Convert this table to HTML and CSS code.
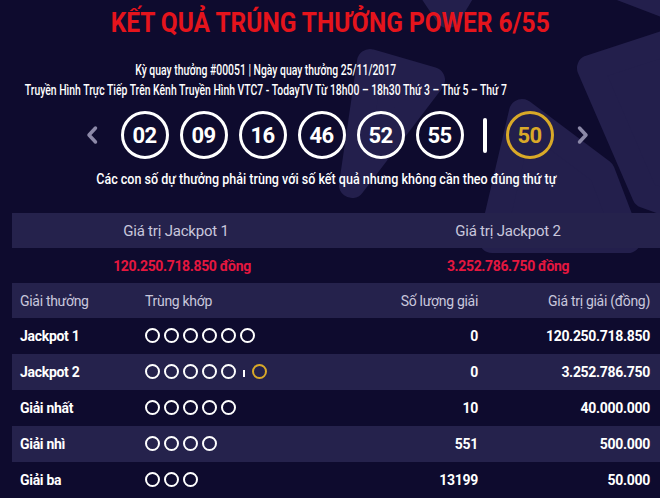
FILE: index.html
```html
<!DOCTYPE html>
<html lang="vi">
<head>
<meta charset="utf-8">
<title>Kết quả Power 6/55</title>
<link rel="stylesheet" href="styles.css">
</head>
<body>
<div class="page">
  <svg class="bg-logo" viewBox="0 0 660 260" width="660" height="260" aria-hidden="true">
    <g fill="#231f4c" stroke="#231f4c" stroke-width="26" stroke-linejoin="round">
      <polygon points="418,-30 475,-30 448,15"/>
      <polygon points="575,-30 700,-30 700,18"/>
      <polygon points="590,68 700,32 700,215 645,195"/>
      <polygon points="370,62 432,80 352,185"/>
      <polygon points="492,240 522,112 602,172 628,240"/>
    </g>
  </svg>

  <h1 class="title"><span class="cond">KẾT QUẢ TRÚNG THƯỞNG POWER 6/55</span></h1>

  <div class="info">
    <span class="info-line cond">Kỳ quay thưởng #00051 | Ngày quay thưởng 25/11/2017</span>
    <span class="info-line cond">Truyền Hình Trực Tiếp Trên Kênh Truyền Hình VTC7 - TodayTV Từ 18h00 – 18h30 Thứ 3 – Thứ 5 – Thứ 7</span>
  </div>

  <div class="balls">
    <svg class="arrow" viewBox="0 0 12 20" width="12" height="20"><polyline points="9.5,3 3,10 9.5,17" fill="none" stroke="#8c89a8" stroke-width="3.5" stroke-linecap="round" stroke-linejoin="round"/></svg>
    <div class="ball-list">
      <span class="ball">02</span>
      <span class="ball">09</span>
      <span class="ball">16</span>
      <span class="ball">46</span>
      <span class="ball">52</span>
      <span class="ball">55</span>
      <span class="divider"></span>
      <span class="ball ball-gold">50</span>
    </div>
    <svg class="arrow" viewBox="0 0 12 20" width="12" height="20"><polyline points="2.5,3 9,10 2.5,17" fill="none" stroke="#8c89a8" stroke-width="3.5" stroke-linecap="round" stroke-linejoin="round"/></svg>
  </div>

  <p class="caption"><span class="cond">Các con số dự thưởng phải trùng với số kết quả nhưng không cần theo đúng thứ tự</span></p>

  <div class="jackpot">
    <div class="jp-head jp-1">Giá trị Jackpot 1</div>
    <div class="jp-head jp-2">Giá trị Jackpot 2</div>
    <div class="jp-val jp-1">120.250.718.850 đồng</div>
    <div class="jp-val jp-2">3.252.786.750 đồng</div>
  </div>

  <div class="prizes">
    <div class="row row-head">
      <span>Giải thưởng</span>
      <span>Trùng khớp</span>
      <span class="num">Số lượng giải</span>
      <span class="num">Giá trị giải (đồng)</span>
    </div>
    <div class="row">
      <span>Jackpot 1</span>
      <span class="dots"><i></i><i></i><i></i><i></i><i></i><i></i></span>
      <span class="num">0</span>
      <span class="num">120.250.718.850</span>
    </div>
    <div class="row row-alt">
      <span>Jackpot 2</span>
      <span class="dots"><i></i><i></i><i></i><i></i><i></i><b class="sep"></b><i class="gold"></i></span>
      <span class="num">0</span>
      <span class="num">3.252.786.750</span>
    </div>
    <div class="row">
      <span>Giải nhất</span>
      <span class="dots"><i></i><i></i><i></i><i></i><i></i></span>
      <span class="num">10</span>
      <span class="num">40.000.000</span>
    </div>
    <div class="row row-alt">
      <span>Giải nhì</span>
      <span class="dots"><i></i><i></i><i></i><i></i></span>
      <span class="num">551</span>
      <span class="num">500.000</span>
    </div>
    <div class="row">
      <span>Giải ba</span>
      <span class="dots"><i></i><i></i><i></i></span>
      <span class="num">13199</span>
      <span class="num">50.000</span>
    </div>
  </div>
</div>
</body>
</html>
```

FILE: styles.css
```css
* { box-sizing: border-box; }
html, body {
  margin: 0;
  padding: 0;
  background: #0e0b2e;
}
body {
  font-family: Roboto, "Noto Sans", sans-serif;
  color: #ffffff;
}
.page {
  position: relative;
  width: 660px;
  height: 498px;
  overflow: hidden;
  background: #0e0b2e;
}
.bg-logo {
  position: absolute;
  left: 0;
  top: 0;
}
.cond {
  display: inline-block;
  white-space: nowrap;
  transform-origin: center;
}
.title {
  position: relative;
  margin: 0;
  padding-top: 6px;
  height: 60px;
  text-align: center;
  font-size: 28px;
  line-height: 33px;
  font-weight: 700;
  color: #e5141c;
}
.title .cond { transform: scaleX(0.874); }
.info {
  position: relative;
  width: 532px;
  display: flex;
  flex-direction: column;
  align-items: center;
}
.info-line {
  font-size: 14px;
  line-height: 20px;
  font-weight: 500;
  transform: scaleX(0.742);
}
.balls {
  position: relative;
  margin-top: 11px;
  display: flex;
  align-items: center;
  justify-content: center;
  gap: 23px;
  padding-left: 14px;
  height: 48px;
}
.arrow { display: block; }
.ball-list {
  display: flex;
  align-items: center;
  gap: 11px;
}
.ball {
  width: 48px;
  height: 48px;
  border: 3px solid #ffffff;
  border-radius: 50%;
  display: flex;
  align-items: center;
  justify-content: center;
  font-size: 22px;
  font-weight: 700;
  letter-spacing: -0.6px;
}
.ball-gold {
  border-color: #d9a928;
  color: #d9a928;
}
.divider {
  width: 4px;
  height: 35px;
  background: #ffffff;
  border-radius: 2px;
  margin: 0 8px;
}
.caption {
  position: relative;
  margin: 11px 0 0;
  padding-right: 8px;
  text-align: center;
  font-size: 14.5px;
  line-height: 20px;
  font-weight: 500;
}
.caption .cond { transform: scaleX(0.864); }
.jackpot {
  position: relative;
  margin: 23px 0 0 12px;
  display: grid;
  grid-template-columns: 328px 1fr;
}
.jp-head {
  background: #25224c;
  height: 35px;
  display: flex;
  align-items: center;
  justify-content: center;
  font-size: 15px;
  color: #c9c7dc;
  letter-spacing: -0.2px;
}
.jp-val {
  height: 35px;
  display: flex;
  align-items: center;
  justify-content: center;
  font-size: 14px;
  font-weight: 700;
  color: #e5173f;
  letter-spacing: -0.35px;
}
.jp-head.jp-2 { padding-left: 16px; }
.jp-val.jp-1 { padding-left: 12px; }
.jp-val.jp-2 { padding-left: 16px; }
.prizes {
  position: relative;
  margin-left: 12px;
}
.row {
  display: grid;
  grid-template-columns: 125px 233px 100px 1fr;
  align-items: center;
  height: 36px;
  padding: 0 10px 0 8px;
  font-size: 14px;
  font-weight: 700;
  letter-spacing: -0.3px;
}
.row-head {
  height: 35px;
  background: #25224c;
  color: #c9c7dc;
  font-weight: 400;
}
.row-alt { background: #25224c; }
.num { text-align: right; }
.dots {
  display: flex;
  align-items: center;
  gap: 4px;
  margin-top: -2px;
}
.dots i {
  display: block;
  width: 15px;
  height: 15px;
  border: 2px solid #ffffff;
  border-radius: 50%;
}
.dots i.gold { border-color: #d9a928; }
.dots .sep {
  display: block;
  width: 2px;
  height: 7px;
  background: #ffffff;
  margin: 4px 3px 0;
}
```
